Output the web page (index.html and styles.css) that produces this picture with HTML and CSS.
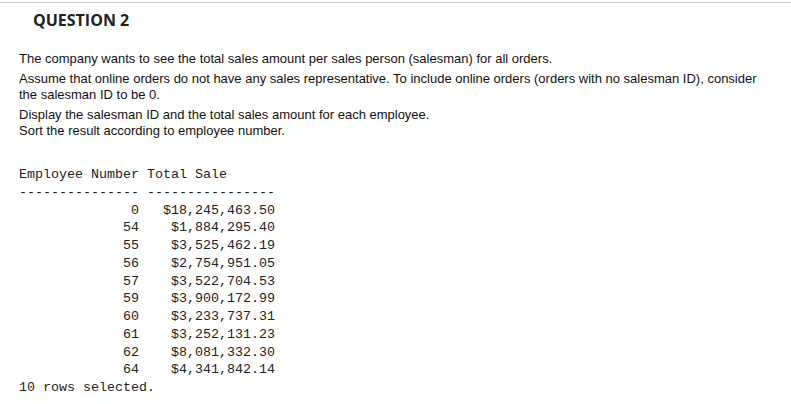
FILE: index.html
```html
<!DOCTYPE html>
<html lang="en">
<head>
    <meta charset="UTF-8">
    <title>Question 2</title>
    <link rel="stylesheet" href="styles.css">
</head>
<body>
    <div class="question">
        <h2 class="question-title">QUESTION 2</h2>
        <div class="question-body">
            <p>The company wants to see the total sales amount per sales person (salesman) for all orders.</p>
            <p>Assume that online orders do not have any sales representative. To include online orders (orders with no salesman ID), consider the salesman ID to be 0.</p>
            <p>Display the salesman ID and the total sales amount for each employee.<br>Sort the result according to employee number.</p>
<pre class="output">
Employee Number Total Sale
--------------- ----------------
              0   $18,245,463.50
             54    $1,884,295.40
             55    $3,525,462.19
             56    $2,754,951.05
             57    $3,522,704.53
             59    $3,900,172.99
             60    $3,233,737.31
             61    $3,252,131.23
             62    $8,081,332.30
             64    $4,341,842.14
10 rows selected.</pre>
        </div>
    </div>
</body>
</html>
```

FILE: styles.css
```css
body {
    margin: 0;
    background: #fff;
    font-family: "Liberation Sans", Arial, sans-serif;
    color: #111;
}
.question {
    border-top: 1px solid #cfcfcf;
    margin-top: 2px;
}
.question-title {
    font-family: "Open Sans", sans-serif;
    font-weight: bold;
    font-size: 16px;
    color: #222;
    margin: 6px 0 0 33px;
}
.question-body {
    padding: 0 30px 0 19px;
    font-size: 13px;
    line-height: 16px;
    margin-top: 20px;
}
.question-body p {
    margin: 0 0 4px;
}
.output {
    font-family: "Liberation Mono", "Courier New", monospace;
    font-size: 13.33px;
    line-height: 17.75px;
    margin: 27px 0 0;
    color: #222;
}
```
